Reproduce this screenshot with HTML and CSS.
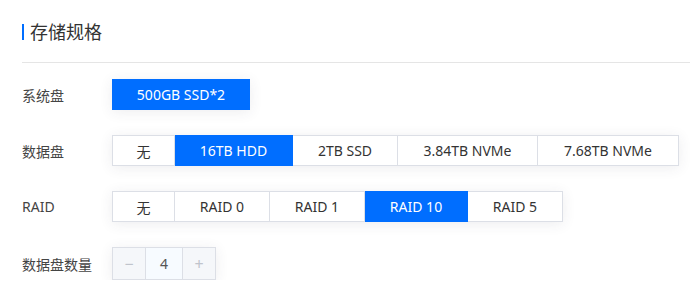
FILE: index.html
```html
<!DOCTYPE html>
<html lang="zh-CN">
<head>
    <meta charset="UTF-8">
    <title>存储规格</title>
    <link rel="stylesheet" href="styles.css">
</head>
<body>
    <div class="panel">
        <div class="panel-title">存储规格</div>
        <div class="divider"></div>

        <div class="form-row">
            <div class="form-label">系统盘</div>
            <div class="btn-group">
                <button class="opt active wide">500GB SSD*2</button>
            </div>
        </div>

        <div class="form-row">
            <div class="form-label">数据盘</div>
            <div class="btn-group">
                <button class="opt w63">无</button>
                <button class="opt active w118">16TB HDD</button>
                <button class="opt w105">2TB SSD</button>
                <button class="opt w140">3.84TB NVMe</button>
                <button class="opt w141">7.68TB NVMe</button>
            </div>
        </div>

        <div class="form-row">
            <div class="form-label">RAID</div>
            <div class="btn-group">
                <button class="opt w63">无</button>
                <button class="opt w95">RAID 0</button>
                <button class="opt w95">RAID 1</button>
                <button class="opt active w103">RAID 10</button>
                <button class="opt w95">RAID 5</button>
            </div>
        </div>

        <div class="form-row tall">
            <div class="form-label">数据盘数量</div>
            <div class="stepper">
                <button class="step-btn">&minus;</button>
                <div class="step-value">4</div>
                <button class="step-btn">+</button>
            </div>
        </div>
    </div>
</body>
</html>
```

FILE: styles.css
```css
body {
    margin: 0;
    background: #fff;
    font-family: "Noto Sans", "Noto Sans CJK SC", sans-serif;
    color: #333;
}
.panel {
    padding: 22px 0 0 22px;
}
.panel-title {
    display: flex;
    align-items: center;
    gap: 6px;
    height: 20px;
    font-size: 18px;
    line-height: 20px;
    color: #333;
}
.panel-title::before {
    content: "";
    width: 2px;
    height: 16px;
    background: #006eff;
}
.divider {
    height: 1px;
    background: #e5e5e5;
    margin-top: 20px;
}
.form-row {
    display: flex;
    align-items: center;
    height: 31px;
    margin-top: 25px;
}
.form-row.tall {
    height: 33px;
}
.divider + .form-row {
    margin-top: 16px;
}
.form-label {
    width: 90px;
    font-size: 14px;
    color: #444;
}
.btn-group {
    display: flex;
    box-shadow: 0 2px 14px rgba(54, 58, 80, 0.09);
}
.opt {
    height: 31px;
    border: 1px solid #dcdfe6;
    border-left: none;
    background: #fff;
    color: #333;
    font-family: inherit;
    font-size: 14px;
    padding: 0;
    cursor: pointer;
}
.opt:first-child {
    border-left: 1px solid #dcdfe6;
}
.opt.active {
    background: #006eff;
    border-color: #006eff;
    color: #fff;
}
.wide { width: 138px; }
.w63 { width: 63px; }
.w95 { width: 95px; }
.w103 { width: 103px; }
.w105 { width: 105px; }
.w118 { width: 118px; }
.w140 { width: 140px; }
.w141 { width: 141px; }
.stepper {
    display: flex;
    height: 33px;
    border: 1px solid #dcdfe6;
    box-sizing: border-box;
    box-shadow: 0 2px 14px rgba(54, 58, 80, 0.09);
}
.step-btn {
    width: 32px;
    border: none;
    background: #f5f7fa;
    color: #c0c4cc;
    font-size: 16px;
    font-family: inherit;
    padding: 0;
}
.step-value {
    width: 36px;
    border-left: 1px solid #dcdfe6;
    border-right: 1px solid #dcdfe6;
    background: #f7fbff;
    text-align: center;
    line-height: 31px;
    font-size: 14px;
    color: #555;
}
```
